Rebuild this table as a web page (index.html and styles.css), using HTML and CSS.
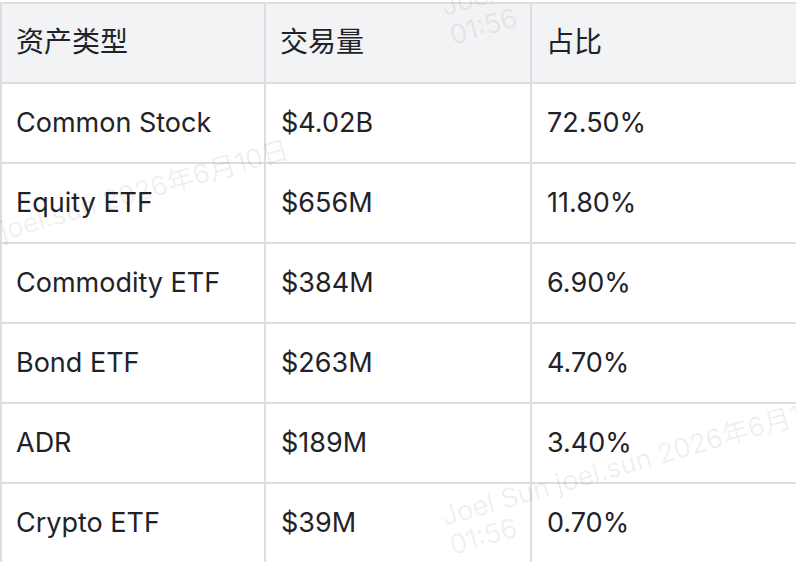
FILE: index.html
```html
<!DOCTYPE html>
<html lang="zh-CN">
<head>
<meta charset="utf-8">
<title>资产类型</title>
<link rel="stylesheet" href="styles.css">
</head>
<body>
<div class="page">
  <table class="data-table">
    <colgroup>
      <col class="c1">
      <col class="c2">
      <col class="c3">
    </colgroup>
    <thead>
      <tr><th>资产类型</th><th>交易量</th><th>占比</th></tr>
    </thead>
    <tbody>
      <tr><td>Common Stock</td><td>$4.02B</td><td>72.50%</td></tr>
      <tr><td>Equity ETF</td><td>$656M</td><td>11.80%</td></tr>
      <tr><td>Commodity ETF</td><td>$384M</td><td>6.90%</td></tr>
      <tr><td>Bond ETF</td><td>$263M</td><td>4.70%</td></tr>
      <tr><td>ADR</td><td>$189M</td><td>3.40%</td></tr>
      <tr><td>Crypto ETF</td><td>$39M</td><td>0.70%</td></tr>
    </tbody>
  </table>
  <div class="wm wm-top">Joel Sun joel.sun 2026年6月10日<br>01:56</div>
  <div class="wm wm-left">Joel Sun joel.sun 2026年6月10日<br>01:56</div>
  <div class="wm wm-bottom">Joel Sun joel.sun 2026年6月10日<br>01:56</div>
</div>
</body>
</html>
```
FILE: styles.css
```css
html, body {
  margin: 0;
  padding: 0;
  background: #ffffff;
  overflow: hidden;
}
body {
  font-family: Inter, "Noto Sans CJK SC", sans-serif;
  color: #1f2329;
}
.page {
  position: relative;
  width: 796px;
  height: 562px;
  overflow: hidden;
  padding-top: 2px;
  box-sizing: border-box;
}
.data-table {
  border-collapse: separate;
  border-spacing: 0;
  table-layout: fixed;
  width: 798px;
  border-top: 2px solid #dcdde0;
  border-left: 2px solid #dcdde0;
  font-size: 27px;
}
.c1 { width: 264px; }
.c2 { width: 266px; }
.c3 { width: 266px; }
.data-table th,
.data-table td {
  height: 78px;
  padding: 0 14px;
  box-sizing: content-box;
  border-right: 2px solid #dcdde0;
  border-bottom: 2px solid #dcdde0;
  text-align: left;
  vertical-align: middle;
  white-space: nowrap;
  line-height: 1.2;
}
.data-table td:nth-child(n+2) {
  padding-left: 15px;
}
.data-table th {
  background: #f2f3f5;
  font-weight: 400;
  font-size: 28px;
}
.wm {
  position: absolute;
  font-family: Inter, "Noto Sans CJK SC", sans-serif;
  font-size: 27px;
  line-height: 30px;
  color: rgba(0, 0, 0, 0.07);
  white-space: nowrap;
  transform-origin: 0 0;
  transform: rotate(-16deg);
  pointer-events: none;
}
.wm-top { left: 438px; top: -7px; }
.wm-left { left: -117px; top: 250px; }
.wm-bottom { left: 438px; top: 503px; }
```
